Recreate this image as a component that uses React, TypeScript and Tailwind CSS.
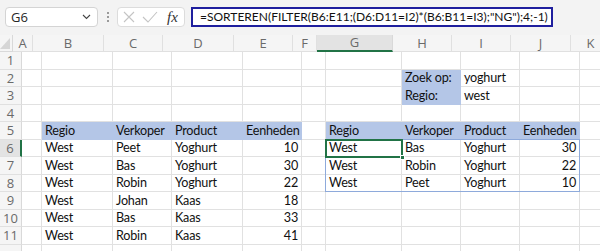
import React from 'react';

type Cell = { v: string; right?: boolean; fill?: boolean };

const cols = ['A', 'B', 'C', 'D', 'E', 'F', 'G', 'H', 'I', 'J', 'K'];
const colWidths = ['w-[20px]', 'w-[71px]', 'w-[59px]', 'w-[71px]', 'w-[59px]', 'w-[24px]', 'w-[76px]', 'w-[59px]', 'w-[59px]', 'w-[60px]', 'w-[40px]'];
const rowHeights = ['h-[18px]', 'h-[17px]', 'h-[18px]', 'h-[17px]', 'h-[18px]', 'h-[17px]', 'h-[18px]', 'h-[17px]', 'h-[18px]', 'h-[17px]', 'h-[18px]', 'h-[17px]'];

const sheet: Record<number, Record<string, Cell>> = {
  2: { H: { v: 'Zoek op:', fill: true }, I: { v: 'yoghurt' } },
  3: { H: { v: 'Regio:', fill: true }, I: { v: 'west' } },
  5: {
    B: { v: 'Regio', fill: true }, C: { v: 'Verkoper', fill: true }, D: { v: 'Product', fill: true }, E: { v: 'Eenheden', fill: true },
    G: { v: 'Regio', fill: true }, H: { v: 'Verkoper', fill: true }, I: { v: 'Product', fill: true }, J: { v: 'Eenheden', fill: true },
  },
  6: { B: { v: 'West' }, C: { v: 'Peet' }, D: { v: 'Yoghurt' }, E: { v: '10', right: true }, G: { v: 'West' }, H: { v: 'Bas' }, I: { v: 'Yoghurt' }, J: { v: '30', right: true } },
  7: { B: { v: 'West' }, C: { v: 'Bas' }, D: { v: 'Yoghurt' }, E: { v: '30', right: true }, G: { v: 'West' }, H: { v: 'Robin' }, I: { v: 'Yoghurt' }, J: { v: '22', right: true } },
  8: { B: { v: 'West' }, C: { v: 'Robin' }, D: { v: 'Yoghurt' }, E: { v: '22', right: true }, G: { v: 'West' }, H: { v: 'Peet' }, I: { v: 'Yoghurt' }, J: { v: '10', right: true } },
  9: { B: { v: 'West' }, C: { v: 'Johan' }, D: { v: 'Kaas' }, E: { v: '18', right: true } },
  10: { B: { v: 'West' }, C: { v: 'Bas' }, D: { v: 'Kaas' }, E: { v: '33', right: true } },
  11: { B: { v: 'West' }, C: { v: 'Robin' }, D: { v: 'Kaas' }, E: { v: '41', right: true } },
};

const FormulaBar = () => (
  <div className="h-[35px] flex items-start pt-[7px] pl-[5px]">
    <div className="w-[93px] h-[20px] bg-white border border-[#d4d4d4] rounded-[4px] flex items-center justify-between pl-[5px] pr-[5px]">
      <span className="text-[13px] text-[#262626] font-['Open_Sans',sans-serif] leading-none">G6</span>
      <svg width="9" height="6" viewBox="0 0 9 6" className="mr-[1px]">
        <path d="M1 1 L4.5 4.5 L8 1" stroke="#444" strokeWidth="1.1" fill="none" />
      </svg>
    </div>
    <div className="w-[19px] h-[20px] flex flex-col items-center justify-center gap-[2px]">
      <div className="w-[2px] h-[2px] bg-[#9a9a9a]" />
      <div className="w-[2px] h-[2px] bg-[#9a9a9a]" />
      <div className="w-[2px] h-[2px] bg-[#9a9a9a]" />
    </div>
    <div className="w-[68px] h-[20px] bg-white border border-[#dcdcdc] rounded-[4px] flex items-center pl-[5px]">
      <svg width="12" height="12" viewBox="0 0 12 12">
        <path d="M1 1 L11 11 M11 1 L1 11" stroke="#c4c4c4" strokeWidth="1.1" />
      </svg>
      <svg width="16" height="12" viewBox="0 0 16 12" className="ml-[7px]">
        <path d="M1 6 L6 11 L15 1" stroke="#c4c4c4" strokeWidth="1.1" fill="none" />
      </svg>
      <span className="ml-[9px] text-[15px] italic text-[#333] font-['Liberation_Serif',serif] leading-none">fx</span>
    </div>
    <div className="ml-[6px] w-[362px] h-[20px] border-2 border-[#1f1f9e] bg-white flex items-center pl-[7px] overflow-hidden">
      <span className="text-[12px] text-[#111] font-['Lato',sans-serif] leading-none whitespace-nowrap">
        =SORTEREN(FILTER(B6:E11;(D6:D11=I2)*(B6:B11=I3);"NG");4;-1)
      </span>
    </div>
  </div>
);

const HeaderRow = () => (
  <div className="flex h-[17px] bg-[#f5f5f5]">
    <div className="w-[22px] h-full border-r border-b border-[#d9d9d9] flex items-end justify-end pr-[2px] pb-[2px]">
      <svg width="10" height="11" viewBox="0 0 10 11">
        <path d="M10 0 L10 11 L0 11 Z" fill="#d6d6d6" />
      </svg>
    </div>
    {cols.map((c, i) => (
      <div
        key={c}
        className={`${colWidths[i]} h-full shrink-0 border-r flex items-center justify-center text-[13px] text-[#6a6a6a] font-['Open_Sans',sans-serif] leading-none ${
          c === 'G' ? 'bg-[#e3e3e3] border-b-2 border-b-[#217346] border-r-[#d9d9d9]' : 'border-b border-[#e0e0e0]'
        }`}
      >
        {c}
      </div>
    ))}
  </div>
);

const GridRow = ({ r, hClass }: { r: number; hClass: string }) => {
  const data = sheet[r] || {};
  const sel = r === 6;
  return (
    <div className={`flex ${hClass}`}>
      <div
        className={`w-[22px] h-full shrink-0 border-b border-[#e0e0e0] flex items-center justify-center text-[13px] text-[#6a6a6a] font-['Open_Sans',sans-serif] leading-none ${
          sel ? 'bg-[#e3e3e3] border-r-2 border-r-[#217346]' : 'bg-[#f5f5f5] border-r border-r-[#d9d9d9]'
        }`}
      >
        {r < 12 ? r : ''}
      </div>
      {cols.map((c, i) => {
        const cell = data[c];
        return (
          <div
            key={c}
            className={`${colWidths[i]} h-full shrink-0 border-r border-b flex items-center px-[3px] pt-[1px] text-[12.6px] tracking-[-0.2px] text-[#111] font-['Lato',sans-serif] leading-none whitespace-nowrap ${
              cell?.fill ? 'bg-[#b4c6e7] border-[#b4c6e7]' : 'bg-white border-[#e1e1e1]'
            } ${cell?.right ? 'justify-end' : 'justify-start'}`}
          >
            {cell?.v}
          </div>
        );
      })}
    </div>
  );
};

export default function App() {
  return (
    <div className="w-[600px] h-[251px] overflow-hidden bg-[#f3f3f3]">
      <FormulaBar />
      <HeaderRow />
      <div className="relative bg-white">
        {rowHeights.map((h, i) => (
          <GridRow key={i} r={i + 1} hClass={h} />
        ))}
        {/* spill range G6:J8 */}
        <div className="absolute left-[325px] top-[87px] w-[255px] h-[53px] border border-[#8eaadb] pointer-events-none" />
        {/* active cell G6 */}
        <div className="absolute left-[325px] top-[87px] w-[78px] h-[19px] border-2 border-[#217346] pointer-events-none">
          <div className="absolute right-[-4px] bottom-[-4px] w-[5px] h-[5px] bg-[#217346] border border-white" />
        </div>
      </div>
    </div>
  );
}
